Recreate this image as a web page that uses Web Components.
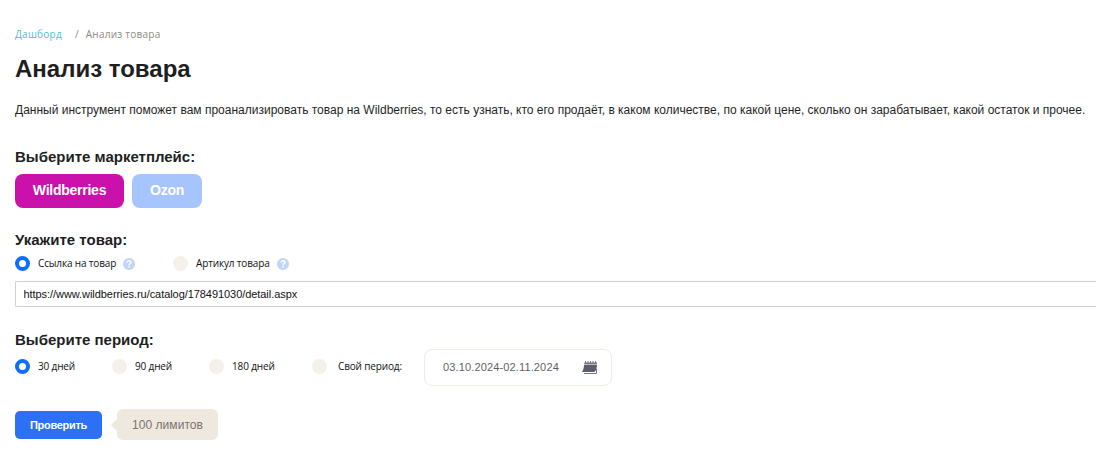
<!DOCTYPE html>
<html lang="ru">
<head>
<meta charset="utf-8">
<title>Анализ товара</title>
<style>
  body {
    margin: 0;
    background: #fff;
    color: #1f1f1f;
    font-family: "Liberation Sans", Arial, sans-serif;
    overflow: hidden;
  }
</style>
</head>
<body>
<product-analysis></product-analysis>

<script>
class BreadCrumbs extends HTMLElement {
  connectedCallback() {
    this.attachShadow({ mode: 'open' });
    this.shadowRoot.innerHTML = `
      <style>
        :host {
          display: flex;
          align-items: center;
          height: 16px;
          font: 10px/16px "Open Sans", sans-serif;
          letter-spacing: 0.25px;
          color: #8d8980;
        }
        a { color: #4fbfd3; text-decoration: none; }
        .sep { margin: 0 7px 0 13px; }
      </style>
      <a>Дашборд</a><span class="sep">/</span><span><slot></slot></span>
    `;
  }
}
customElements.define('bread-crumbs', BreadCrumbs);

class FormSection extends HTMLElement {
  connectedCallback() {
    this.attachShadow({ mode: 'open' });
    this.shadowRoot.innerHTML = `
      <style>
        :host { display: block; }
        h2 {
          margin: 0;
          font-size: 15px;
          line-height: 18px;
          font-weight: bold;
        }
      </style>
      <h2>${this.getAttribute('heading')}</h2>
      <slot></slot>
    `;
  }
}
customElements.define('form-section', FormSection);

class MarketButton extends HTMLElement {
  connectedCallback() {
    this.attachShadow({ mode: 'open' });
    this.shadowRoot.innerHTML = `
      <style>
        :host { display: block; }
        button {
          display: block;
          width: 100%;
          height: 34px;
          padding: 0 0 2px;
          border: none;
          border-radius: 8px;
          background: var(--market-color);
          color: #fff;
          font: bold 14px "Liberation Sans", Arial, sans-serif;
          letter-spacing: -0.25px;
          cursor: pointer;
        }
      </style>
      <button><slot></slot></button>
    `;
  }
}
customElements.define('market-button', MarketButton);

class HelpIcon extends HTMLElement {
  connectedCallback() {
    this.attachShadow({ mode: 'open' });
    this.shadowRoot.innerHTML = `
      <style>
        :host { display: block; width: 12px; height: 12px; }
        svg { display: block; }
      </style>
      <svg width="12" height="12" viewBox="0 0 12 12">
        <circle cx="6" cy="6" r="6" fill="#c0d4fc"/>
        <path d="M4.100 4.600C4.100 3.400 4.900 2.800 6 2.800s1.900.7 1.900 1.600C7.900 5.700 6 5.600 6 7.200" fill="none" stroke="#fff" stroke-width="1.5"/>
        <rect x="5.200" y="8" width="1.600" height="1.500" fill="#fff"/>
      </svg>
    `;
  }
}
customElements.define('help-icon', HelpIcon);

class RadioOption extends HTMLElement {
  connectedCallback() {
    this.attachShadow({ mode: 'open' });
    this.shadowRoot.innerHTML = `
      <style>
        :host {
          display: flex;
          align-items: center;
          height: 15px;
          color: #111;
          font: 10px/15px "Open Sans", sans-serif;
          letter-spacing: -0.15px;
          white-space: nowrap;
        }
        .dot {
          box-sizing: border-box;
          flex: none;
          width: 15px;
          height: 15px;
          margin-right: var(--dot-gap, 8px);
          border-radius: 50%;
          background: #f5f1ea;
        }
        :host([checked]) .dot {
          border: 4px solid #0d6efd;
          background: #fff;
        }
        help-icon { margin-left: 7px; }
      </style>
      <span class="dot"></span>
      <span><slot></slot></span>
      ${this.hasAttribute('help') ? '<help-icon></help-icon>' : ''}
    `;
  }
}
customElements.define('radio-option', RadioOption);

class DateRange extends HTMLElement {
  connectedCallback() {
    this.attachShadow({ mode: 'open' });
    this.shadowRoot.innerHTML = `
      <style>
        :host {
          box-sizing: border-box;
          display: flex;
          align-items: center;
          justify-content: space-between;
          width: 188px;
          height: 37px;
          padding: 0 13px 0 18px;
          border: 1px solid #efebe3;
          border-radius: 8px;
          color: #5f5f67;
          font-size: 11px;
          letter-spacing: 0.14px;
        }
        span { padding-bottom: 1px; }
        svg { display: block; }
      </style>
      <span><slot></slot></span>
      <svg width="16" height="14" viewBox="0 0 16 14">
        <path d="M2.500 1.500h12.500v2H2.200z" fill="#777780"/>
        <path d="M3.500 0v2M6 0v2M8.500 0v2M11 0v2M13.500 0v2" stroke="#777780"/>
        <path d="M2.100 4h12.900l-.4 3c-.3 2.300-1.400 4-3.100 4H0C1.300 9.200 1.800 6.700 2.100 4z" fill="#5c5f6b"/>
        <path d="M2 12.500h12.500V8" fill="none" stroke="#777780"/>
      </svg>
    `;
  }
}
customElements.define('date-range', DateRange);

class LimitBadge extends HTMLElement {
  connectedCallback() {
    this.attachShadow({ mode: 'open' });
    this.shadowRoot.innerHTML = `
      <style>
        :host { display: flex; align-items: center; }
        .arrow {
          border: 6px solid transparent;
          border-left: none;
          border-right-color: #efe8df;
        }
        .label {
          width: 101px;
          height: 31px;
          border-radius: 6px;
          background: #efe8df;
          color: #77736c;
          font-size: 12px;
          line-height: 32px;
          text-align: center;
          letter-spacing: 0.05px;
        }
      </style>
      <span class="arrow"></span>
      <span class="label"><slot></slot></span>
    `;
  }
}
customElements.define('limit-badge', LimitBadge);

class ProductAnalysis extends HTMLElement {
  connectedCallback() {
    this.attachShadow({ mode: 'open' });
    this.shadowRoot.innerHTML = `
      <style>
        :host {
          display: block;
          box-sizing: border-box;
          height: 458px;
          padding: 26px 0 0 15px;
        }
        h1 {
          margin: 12px 0 0;
          font-size: 24px;
          line-height: 30px;
        }
        p {
          margin: 17px 0 0;
          font-size: 12px;
          line-height: 18px;
          white-space: nowrap;
        }
        .market { margin-top: 29px; }
        .product { margin-top: 23px; }
        .period { margin-top: 24px; }
        .row { display: flex; align-items: center; }
        .market .row { gap: 8px; margin-top: 8px; }
        .wb { width: 109px; --market-color: #cb11ab; }
        .ozon { width: 70px; --market-color: #a6c5ff; }
        .product .row {
          display: grid;
          grid-template-columns: 158px auto;
          justify-content: start;
          margin-top: 7px;
        }
        input {
          display: block;
          box-sizing: border-box;
          width: 100%;
          height: 26px;
          margin-top: 10px;
          padding: 0 7.5px;
          border: 1px solid #ced0d9;
          border-right: none;
          border-radius: 2px 0 0 2px;
          color: #111;
          font: 11px "Liberation Sans", Arial, sans-serif;
          letter-spacing: -0.06px;
        }
        .period .row {
          display: grid;
          grid-template-columns: 97px 97px 103px 112px auto;
          justify-content: start;
        }
        .period radio-option { margin-bottom: 2px; }
        .custom { --dot-gap: 11px; }
        .actions { gap: 9px; margin-top: 23px; }
        .check {
          width: 87px;
          height: 28px;
          padding: 0;
          border: none;
          border-radius: 5px;
          background: #2b70f5;
          color: #fff;
          font: bold 11px "Liberation Sans", Arial, sans-serif;
          letter-spacing: -0.3px;
        }
      </style>
      <bread-crumbs>Анализ товара</bread-crumbs>
      <h1>Анализ товара</h1>
      <p>Данный инструмент поможет вам проанализировать товар на Wildberries, то есть узнать, кто его продаёт, в каком количестве, по какой цене, сколько он зарабатывает, какой остаток и прочее.</p>
      <form-section class="market" heading="Выберите маркетплейс:">
        <div class="row">
          <market-button class="wb">Wildberries</market-button>
          <market-button class="ozon">Ozon</market-button>
        </div>
      </form-section>
      <form-section class="product" heading="Укажите товар:">
        <div class="row">
          <radio-option checked help>Ссылка на товар</radio-option>
          <radio-option help>Артикул товара</radio-option>
        </div>
        <input type="text" value="https://www.wildberries.ru/catalog/178491030/detail.aspx">
      </form-section>
      <form-section class="period" heading="Выберите период:">
        <div class="row">
          <radio-option checked>30 дней</radio-option>
          <radio-option>90 дней</radio-option>
          <radio-option>180 дней</radio-option>
          <radio-option class="custom">Свой период:</radio-option>
          <date-range>03.10.2024-02.11.2024</date-range>
        </div>
      </form-section>
      <div class="row actions">
        <button class="check">Проверить</button>
        <limit-badge>100 лимитов</limit-badge>
      </div>
    `;
  }
}
customElements.define('product-analysis', ProductAnalysis);
</script>
</body>
</html>
